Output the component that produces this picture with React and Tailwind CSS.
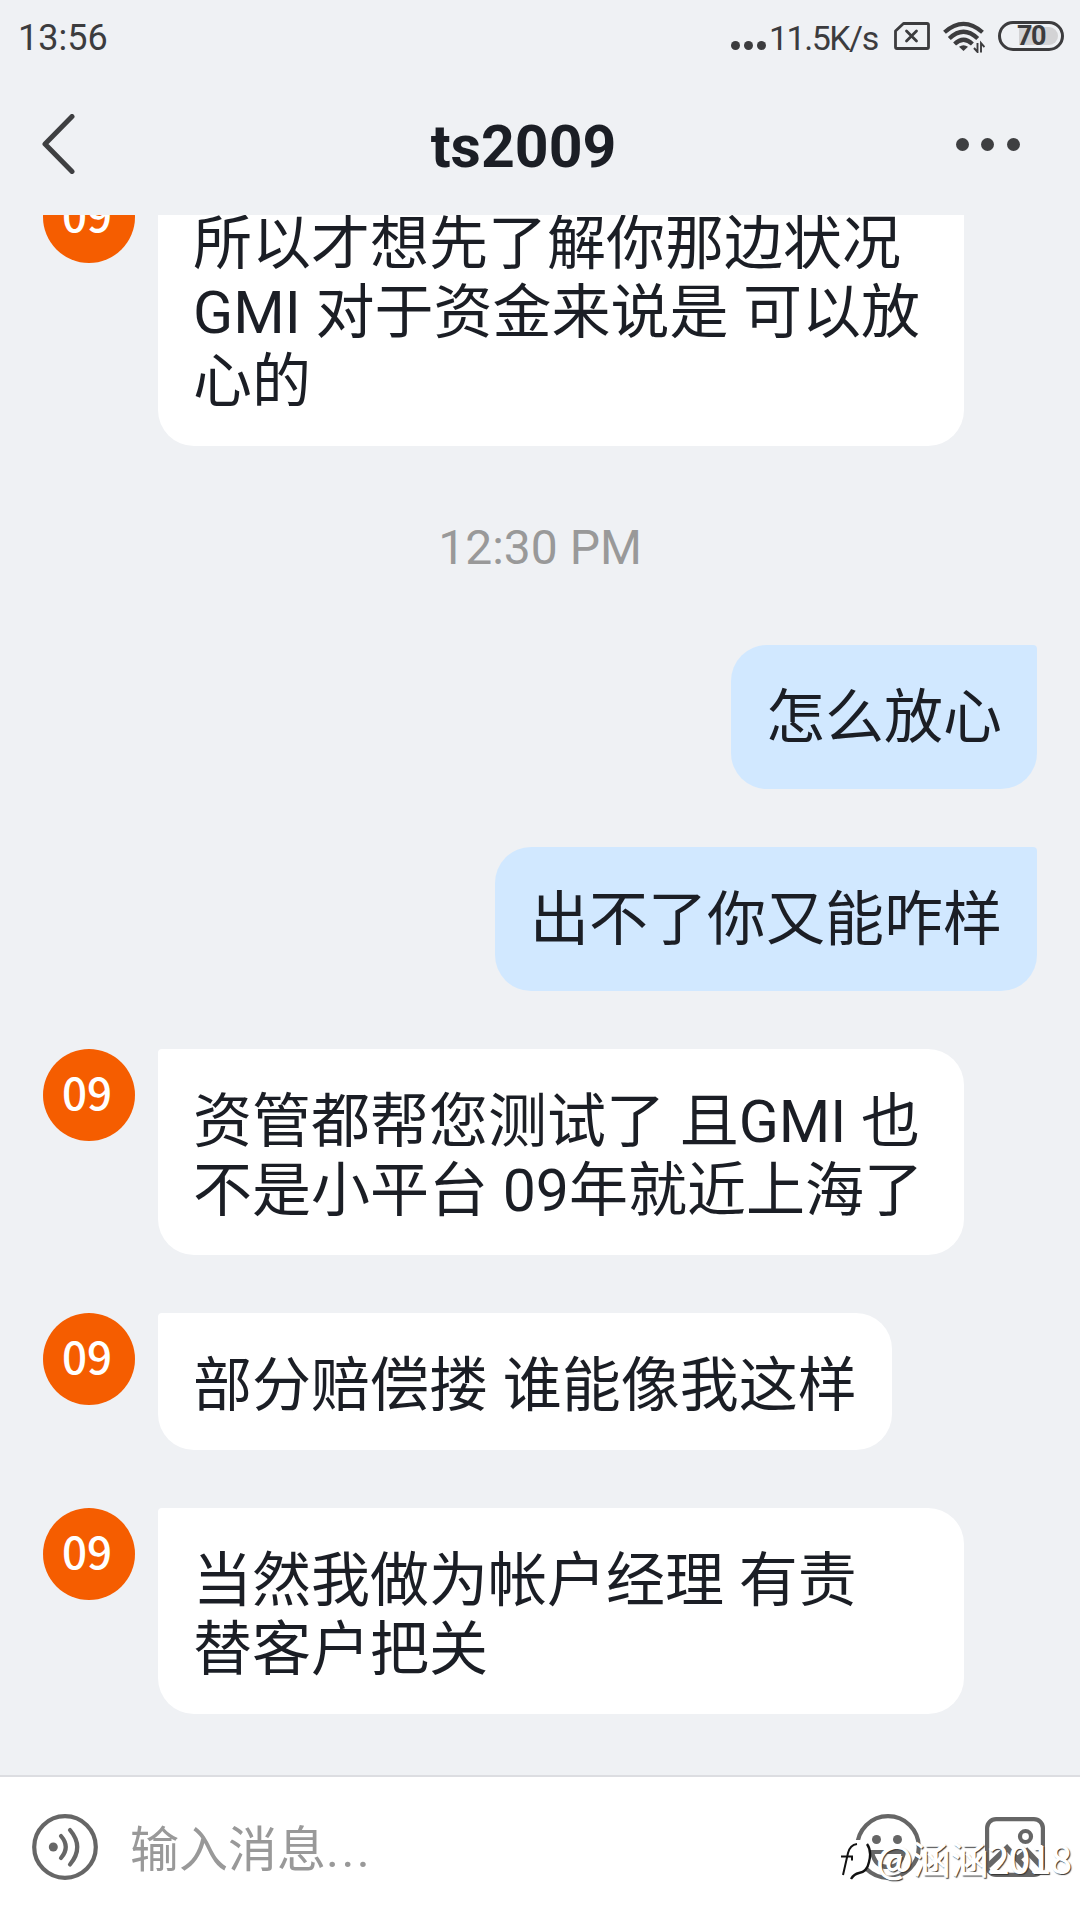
const messages = [
    { id: 1, from: "them", lines: ["所以才想先了解你那边状况", "GMI 对于资金来说是 可以放", "心的"] },
    { id: 2, from: "time", text: "12:30 PM" },
    { id: 3, from: "me", lines: ["怎么放心"] },
    { id: 4, from: "me", lines: ["出不了你又能咋样"] },
    { id: 5, from: "them", lines: ["资管都帮您测试了 且GMI 也", "不是小平台 09年就近上海了"] },
    { id: 6, from: "them", lines: ["部分赔偿搂 谁能像我这样"] },
    { id: 7, from: "them", lines: ["当然我做为帐户经理 有责", "替客户把关"] },
];

const StatusBar = () => (
    <div className="h-[72px] pl-[18px] pr-[16px] flex items-center justify-between text-[#3c3c3e]">
        <span className="text-[36px] leading-none pt-[3px]">13:56</span>
        <div className="flex items-center">
            <div className="flex gap-[4px] mt-[19px] mr-[3px]">
                <span className="size-[9px] rounded-full bg-[#3c3c3e]" />
                <span className="size-[9px] rounded-full bg-[#3c3c3e]" />
                <span className="size-[9px] rounded-full bg-[#3c3c3e]" />
            </div>
            <span className="w-[125px] text-[34px] leading-none tracking-[-1.5px] whitespace-nowrap pt-[3px]">11.5K/s</span>
            {/* SIM */}
            <svg className="w-[36px] h-[28px]" viewBox="0 0 36 28" fill="none" stroke="currentColor" strokeWidth="2.8" strokeLinejoin="round" strokeLinecap="round">
                <path d="M9.5 1.5H33Q34.5 1.5 34.5 3V25Q34.5 26.5 33 26.5H3Q1.5 26.5 1.5 25V9Z" />
                <path d="M12.5 9l10 10M22.5 9l-10 10" />
            </svg>
            {/* Wifi */}
            <svg className="w-[42px] h-[32px] ml-[13px] mt-[2px]" viewBox="0 0 42 32" fill="none" stroke="currentColor" strokeWidth="4.2">
                <path d="M1.5 11.3Q20.5-5.5 39.5 11.3" />
                <path d="M6.3 17.5Q20.5 4 34.7 17.5" />
                <path d="M11.6 23Q20.5 14.5 29.4 23" />
                <path d="M20.5 30l-4.5-4.2q4.5-3.3 9 0z" fill="currentColor" stroke="none" />
                <path d="M34.5 22v9l-3.5-4M38 31.5V22l3.5 4" strokeWidth="1.9" />
            </svg>
            <div className="relative ml-[13px] w-[66px] h-[30px] rounded-full border-[3px] border-[#3c3c3e] overflow-hidden">
                <div className="absolute inset-y-[3px] left-[18px] right-[3px] rounded-r-full bg-[#d3d3d5]" />
                <span className="absolute inset-0 flex items-center justify-center pt-px text-[27px] font-bold leading-none tracking-[-1.5px]">70</span>
            </div>
        </div>
    </div>
);

const Header = () => (
    <header className="h-[143px] pl-[42px] pr-[60px] flex items-center justify-between text-[#3e3f41]">
        <svg className="w-[33px] h-[60px]" viewBox="0 0 33 60" fill="none" stroke="currentColor" strokeWidth="5" strokeLinecap="round" strokeLinejoin="round">
            <path d="M30 2.5L3 30l27 27.5" />
        </svg>
        <h1 className="pl-[16px] pt-[6px] text-[59px] leading-none font-bold text-[#1b1e25]">ts2009</h1>
        <div className="flex gap-[12.5px] pt-[1px]">
            <span className="size-[13px] rounded-full bg-[#3e3f41]" />
            <span className="size-[13px] rounded-full bg-[#3e3f41]" />
            <span className="size-[13px] rounded-full bg-[#3e3f41]" />
        </div>
    </header>
);

const Message = ({ message }) => {
    if (message.from === "time") {
        // the negative margins cancel the list gap around the timestamp
        return (
            <div className="h-[199px] -my-[58px] pt-[4px] flex items-center justify-center text-[48px] text-[#999999]">
                {message.text}
            </div>
        );
    }

    const text = message.lines.map((line) => (
        <p key={line} className="whitespace-nowrap">{line}</p>
    ));

    if (message.from === "me") {
        return (
            <div className="self-end mr-[43px] h-[144px] px-[35px] pt-[38px] rounded-[36px] rounded-tr-[4px] bg-[#d1e8ff]">
                {text}
            </div>
        );
    }

    return (
        <div className="flex items-start pl-[43px] gap-[23px]">
            <div className="size-[92px] pr-[4px] pb-[8px] rounded-full bg-[#f55d00] text-white text-[44px] leading-none font-medium flex items-center justify-center font-['Noto_Sans_CJK_SC',sans-serif]">
                09
            </div>
            <div className={`${message.lines.length > 1 ? "w-[806px]" : ""} px-[35px] pt-[38px] pb-[30px] rounded-[36px] rounded-tl-[4px] bg-white`}>
                {text}
            </div>
        </div>
    );
};

const InputBar = () => (
    <footer className="relative h-[145px] border-t-2 border-[#dcdde1] bg-white pl-[32px] pr-[35px] flex items-center">
        <svg className="size-[66px] -mt-[4px] text-[#666666]" viewBox="0 0 66 66" fill="none" stroke="currentColor" strokeWidth="4.2" strokeLinecap="round">
            <circle cx="33" cy="33" r="30.8" />
            <circle cx="21.3" cy="33" r="4.5" fill="currentColor" stroke="none" />
            <path d="M29 22q9.5 11 0 22" />
            <path d="M38 16q14.5 17 0 34.5" />
        </svg>
        <span className="ml-[32px] pt-[4px] flex-1 text-[49px] leading-none text-[#999999]">
            输入消息<span className="tracking-[2.5px]">...</span>
        </span>
        <svg className="size-[66px] -mt-[4px] text-[#666666]" viewBox="0 0 66 66" fill="none" stroke="currentColor" strokeWidth="4.2">
            <circle cx="33" cy="33" r="30.8" />
            <circle cx="21.5" cy="25.5" r="4.5" fill="currentColor" stroke="none" />
            <circle cx="42.5" cy="25.5" r="4.5" fill="currentColor" stroke="none" />
            <path d="M17 38h32q-3 15-16 15T17 38z" />
        </svg>
        <svg className="size-[60px] -mt-[4px] ml-[64px] text-[#666666]" viewBox="0 0 60 60" fill="none" stroke="currentColor" strokeWidth="4.2">
            <rect x="2.1" y="2.1" width="55.8" height="55.8" rx="9" />
            <circle cx="40.5" cy="19.5" r="5.5" />
            <path d="M3 49L22 31l24 26M31 43l11-9 15 16" strokeWidth="5.5" />
        </svg>
        {/* Watermark over the buttons */}
        <div className="absolute right-[8px] top-[55px] flex items-center text-white">
            <svg className="w-[34px] h-[44px] mr-[4px] mt-[8px]" viewBox="0 0 34 44" fill="none">
                <path d="M1 13l5-2 3-8 7-3h10q7 5 5 18-2 12-10 13-6 1-9 9l-2-6-8-1 4-15z" fill="#fff" />
                <path d="M4 35l5-22q2-8 9-9M2 16.5h11v4" stroke="#111" strokeWidth="2" />
                <path d="M28 4q5 7 2 18-2 10-10 11-5 1-8 6" stroke="#111" strokeWidth="2.4" />
            </svg>
            <span className="text-[38px] leading-none tracking-[-0.2px] [text-shadow:-1px_-1px_0_#fff,1px_1px_1px_#333] font-['Noto_Sans_CJK_SC',sans-serif]">@涵涵2018</span>
        </div>
    </footer>
);

export default function App() {
    return (
        <div className="w-[1080px] h-[1920px] flex flex-col overflow-hidden bg-[#eff1f4] font-['Roboto','Noto_Sans_CJK_SC',sans-serif]">
            <StatusBar />
            <Header />
            <main className="flex-1 min-h-0 overflow-hidden">
                <div className="-mt-[44px] flex flex-col gap-[58px] text-[59px] leading-[69px] text-[#1b1e25]">
                    {messages.map((message) => (
                        <Message key={message.id} message={message} />
                    ))}
                </div>
            </main>
            <InputBar />
        </div>
    );
}
